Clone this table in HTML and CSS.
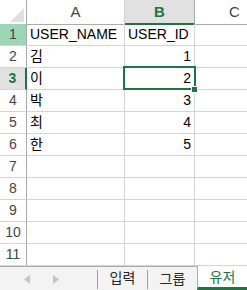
FILE: index.html
```html
<!DOCTYPE html>
<html lang="ko">
  <head>
    <meta charset="UTF-8" />
    <meta name="viewport" content="width=device-width, initial-scale=1.0" />
    <title>유저</title>
    <link rel="stylesheet" href="styles.css">
  </head>

  <body>
    <div class="sheet">
      <!-- Заголовки столбцов -->
      <div class="row head-row">
        <div class="cell corner">
          <svg width="14" height="14" viewBox="0 0 14 14"><polygon points="14,0 14,14 0,14" fill="#dfdfdf" /></svg>
        </div>
        <div class="cell col-head">A</div>
        <div class="cell col-head active">B</div>
        <div class="cell col-head">C</div>
      </div>

      <div class="row">
        <div class="cell row-head marked">1</div>
        <div class="cell">USER_NAME</div>
        <div class="cell">USER_ID</div>
        <div class="cell"></div>
      </div>
      <div class="row">
        <div class="cell row-head">2</div>
        <div class="cell">김</div>
        <div class="cell num">1</div>
        <div class="cell"></div>
      </div>
      <div class="row">
        <div class="cell row-head active">3</div>
        <div class="cell">이</div>
        <div class="cell num selected">2</div>
        <div class="cell"></div>
      </div>
      <div class="row">
        <div class="cell row-head">4</div>
        <div class="cell">박</div>
        <div class="cell num">3</div>
        <div class="cell"></div>
      </div>
      <div class="row">
        <div class="cell row-head">5</div>
        <div class="cell">최</div>
        <div class="cell num">4</div>
        <div class="cell"></div>
      </div>
      <div class="row">
        <div class="cell row-head">6</div>
        <div class="cell">한</div>
        <div class="cell num">5</div>
        <div class="cell"></div>
      </div>
      <div class="row">
        <div class="cell row-head">7</div>
        <div class="cell"></div>
        <div class="cell"></div>
        <div class="cell"></div>
      </div>
      <div class="row">
        <div class="cell row-head">8</div>
        <div class="cell"></div>
        <div class="cell"></div>
        <div class="cell"></div>
      </div>
      <div class="row">
        <div class="cell row-head">9</div>
        <div class="cell"></div>
        <div class="cell"></div>
        <div class="cell"></div>
      </div>
      <div class="row">
        <div class="cell row-head">10</div>
        <div class="cell"></div>
        <div class="cell"></div>
        <div class="cell"></div>
      </div>
      <div class="row">
        <div class="cell row-head">11</div>
        <div class="cell"></div>
        <div class="cell"></div>
        <div class="cell"></div>
      </div>

      <!-- Вкладки листов -->
      <div class="tabs">
        <div class="tab-nav">
          <svg width="6" height="9" viewBox="0 0 6 9"><polygon points="6,0 6,9 0,4.5" fill="#c4c4c4" /></svg>
          <svg width="6" height="9" viewBox="0 0 6 9"><polygon points="0,0 0,9 6,4.5" fill="#c4c4c4" /></svg>
        </div>
        <div class="tab">입력</div>
        <div class="tab">그룹</div>
        <div class="tab current">유저</div>
      </div>
    </div>
  </body>
</html>
```

FILE: styles.css
```css
body {
  margin: 0;
  background-color: white;
  font-family: "Liberation Sans", "Noto Sans CJK KR", sans-serif;
  overflow: hidden;
}

.sheet {
  width: 247px;
  height: 290px;
  display: flex;
  flex-direction: column;
  overflow: hidden;
}

.row {
  display: grid;
  grid-template-columns: 27px 98px 70px 80px;
  height: 22px;
  flex-shrink: 0;
}

.head-row {
  height: 24px;
}

.cell {
  box-sizing: border-box;
  border-right: 1px solid #d4d4d4;
  border-bottom: 1px solid #d4d4d4;
  padding: 0 3px;
  font-size: 14px;
  line-height: 21px;
  color: #000;
  white-space: nowrap;
}

.num {
  text-align: right;
}

.corner {
  display: flex;
  justify-content: flex-end;
  align-items: flex-end;
  padding: 0 2px 2px 0;
  border-right-color: #ababab;
  border-bottom-color: #ababab;
}

.col-head {
  text-align: center;
  color: #444;
  line-height: 23px;
  font-size: 15px;
  border-bottom-color: #ababab;
}

.col-head.active {
  background-color: #e1e1e1;
  color: #217346;
  font-weight: bold;
  border-bottom: 2px solid #217346;
  border-right-color: #ababab;
}

.row-head {
  text-align: center;
  color: #444;
  font-size: 14px;
  border-right-color: #ababab;
}

.row-head.marked {
  background-color: #9fd5b7;
}

.row-head.active {
  background-color: #e1e1e1;
  color: #217346;
  font-weight: bold;
  border-right: 2px solid #217346;
}

.selected {
  position: relative;
}

/* Рамка активной ячейки */
.selected::after {
  content: "";
  position: absolute;
  top: -2px;
  left: -2px;
  right: -2px;
  bottom: -1px;
  border: 2px solid #217346;
}

/* Маркер заполнения */
.selected::before {
  content: "";
  position: absolute;
  right: -4px;
  bottom: -4px;
  width: 5px;
  height: 5px;
  background-color: #217346;
  border: 1px solid white;
  z-index: 1;
}

.tabs {
  display: flex;
  height: 24px;
  flex-shrink: 0;
  background-color: #f3f3f3;
  border-top: 1px solid #ababab;
  box-sizing: border-box;
  font-size: 14px;
  color: #262626;
}

.tab-nav {
  width: 98px;
  display: flex;
  align-items: center;
  gap: 23px;
  padding-left: 24px;
  box-sizing: border-box;
  border-right: 1px solid #9d9d9d;
  margin: 3px 0 1px;
}

.tab {
  width: 49px;
  text-align: center;
  line-height: 21px;
  margin-top: 1px;
}

.tab + .tab {
  border-left: 1px solid #9d9d9d;
  margin: 3px 0 1px;
  line-height: 18px;
}

.tab.current {
  margin: -1px 0 0;
  background-color: white;
  color: #217346;
  border-left: 1px solid #ababab;
  border-bottom: 3px solid #217346;
  line-height: 22px;
  box-sizing: border-box;
  width: 50px;
}
```
